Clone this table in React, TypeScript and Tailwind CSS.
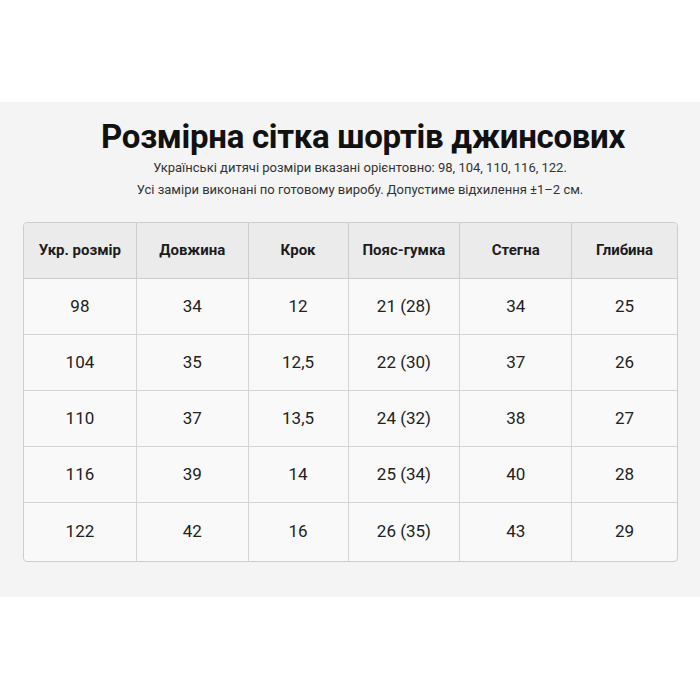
export default function App() {
  const headers = ["Укр. розмір", "Довжина", "Крок", "Пояс-гумка", "Стегна", "Глибина"];
  const rows = [
    ["98", "34", "12", "21 (28)", "34", "25"],
    ["104", "35", "12,5", "22 (30)", "37", "26"],
    ["110", "37", "13,5", "24 (32)", "38", "27"],
    ["116", "39", "14", "25 (34)", "40", "28"],
    ["122", "42", "16", "26 (35)", "43", "29"],
  ];
  const widths = ["w-[113px]", "w-[112px]", "w-[100px]", "w-[112px]", "w-[112px]", "w-[105px]"];
  return (
    <div className="w-[700px] h-[700px] bg-white flex flex-col" style={{ fontFamily: "Roboto, 'Noto Sans', sans-serif" }}>
      <div className="mt-[102px] h-[495px] bg-[#f4f4f4] flex flex-col items-center">
        <h1 className="mt-[15px] ml-[26px] text-[33px] leading-[40px] font-bold text-[#111] tracking-[-0.3px]">
          Розмірна сітка шортів джинсових
        </h1>
        <p className="ml-[20px] text-[13px] leading-[22px] text-[#333] text-center">
          Українські дитячі розміри вказані орієнтовно: 98, 104, 110, 116, 122.
          <br />
          Усі заміри виконані по готовому виробу. Допустиме відхилення ±1–2 см.
        </p>
        <div className="mt-[21px] self-start ml-[23px] w-[655px] border border-[#cdcdcd] rounded-[4px] overflow-hidden bg-[#f9f9f9]">
          <div className="flex h-[56px] bg-[#ebebeb] border-b border-[#cdcdcd]">
            {headers.map((h, i) => (
              <div
                key={h}
                className={`${widths[i]} flex items-center justify-center text-[15px] font-bold text-[#1c1c1c] ${i < 5 ? "border-r border-[#cdcdcd]" : ""}`}
              >
                {h}
              </div>
            ))}
          </div>
          {rows.map((r, ri) => (
            <div key={ri} className={`flex ${ri < 4 ? "h-[56px] border-b border-[#d4d4d4]" : "h-[58px]"}`}>
              {r.map((c, i) => (
                <div
                  key={i}
                  className={`${widths[i]} flex items-center justify-center text-[17px] text-[#222] ${i < 5 ? "border-r border-[#d4d4d4]" : ""}`}
                >
                  {c}
                </div>
              ))}
            </div>
          ))}
        </div>
      </div>
    </div>
  );
}
